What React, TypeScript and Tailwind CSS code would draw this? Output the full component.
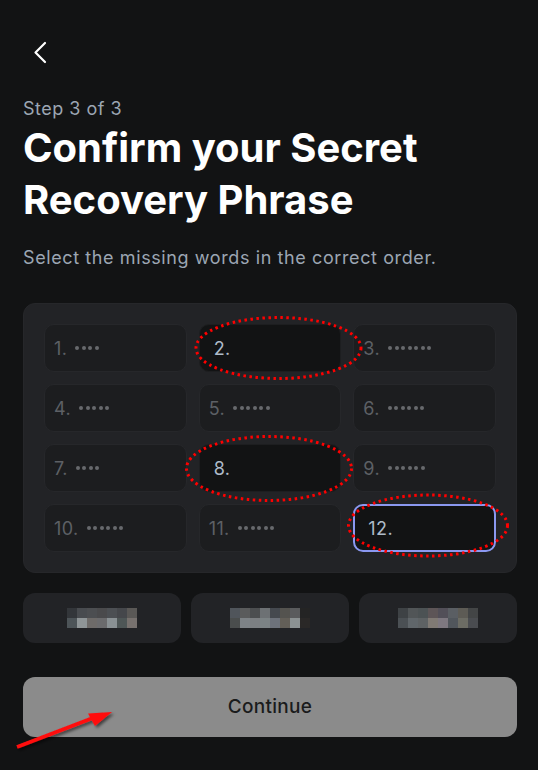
import React from "react";

type Cell = { n: number; dots?: number; active?: boolean };

const cells: Cell[] = [
  { n: 1, dots: 4 },
  { n: 2 },
  { n: 3, dots: 7 },
  { n: 4, dots: 5 },
  { n: 5, dots: 6 },
  { n: 6, dots: 6 },
  { n: 7, dots: 4 },
  { n: 8 },
  { n: 9, dots: 6 },
  { n: 10, dots: 6 },
  { n: 11, dots: 6 },
  { n: 12, active: true },
];

// pixelated (redacted) words, 2 rows each
const blurred: string[][][] = [
  [
    ["#33363a", "#484b4f", "#4c4e51", "#4a4a4c", "#4c4f53", "#45474b", "#5a5856"],
    ["#4d5458", "#8f9597", "#6e6b69", "#6b6b6d", "#8a9194", "#4e5656", "#77716e"],
  ],
  [
    ["#50555b", "#5a5b5c", "#4c4e50", "#6d7174", "#45494f", "#54534f", "#5a5b5d", "#242424"],
    ["#4a4d4d", "#7e8387", "#7c7f82", "#7c8385", "#6d727b", "#635f58", "#8c9293", "#2a2827"],
  ],
  [
    ["#3e4245", "#515557", "#4c5254", "#5d5557", "#524f58", "#5a5e63", "#5d5b55", "#434546"],
    ["#4b5054", "#60666a", "#5e6264", "#807a74", "#7e7880", "#51565c", "#6c6c64", "#4a4c50"],
  ],
];

function Dots({ count }: { count: number }) {
  return (
    <span className="ml-2 flex items-center gap-[2.5px]">
      {Array.from({ length: count }).map((_, i) => (
        <span key={i} className="h-[4px] w-[4px] rounded-full bg-[#67696d]" />
      ))}
    </span>
  );
}

function WordCell({ cell }: { cell: Cell }) {
  if (cell.dots) {
    return (
      <div className="flex h-12 items-center rounded-[10px] border border-[#26272a] bg-[#1c1d1f] pl-[9px] text-[18px] tracking-[0.4px] text-[#5d6065]">
        <span>{cell.n}.</span>
        <Dots count={cell.dots} />
      </div>
    );
  }
  return (
    <div
      className={
        cell.active
          ? "flex h-12 items-center rounded-[10px] border-2 border-[#8b98f0] bg-[#121314] pl-[13px] text-[18px] tracking-[0.4px] text-[#aebbc9]"
          : "flex h-12 items-center rounded-[10px] border border-[#1d1e20] bg-[#121314] pl-[14px] text-[18px] tracking-[0.4px] text-[#aebbc9]"
      }
    >
      <span>{cell.n}.</span>
    </div>
  );
}

function Annotations() {
  return (
    <svg
      className="pointer-events-none absolute left-0 top-0"
      width="538"
      height="770"
      viewBox="0 0 538 770"
    >
      <defs>
        <filter id="shadow" x="-20%" y="-50%" width="140%" height="200%">
          <feDropShadow dx="2" dy="2" stdDeviation="1.5" floodColor="#000" floodOpacity="0.55" />
        </filter>
      </defs>
      <g fill="none" stroke="#ff0000" strokeWidth="3" strokeDasharray="2.5 3.5">
        <ellipse cx="278.5" cy="348" rx="82.5" ry="30.5" />
        <ellipse cx="269" cy="468.5" rx="82.5" ry="32" />
        <ellipse cx="428" cy="525.5" rx="79.5" ry="30.5" />
      </g>
      <g filter="url(#shadow)">
        <line x1="17" y1="747" x2="98" y2="716" stroke="#ff1010" strokeWidth="3.5" />
        <polygon points="112,712 88,713.5 95,726" fill="#ff1010" />
      </g>
    </svg>
  );
}

export default function App() {
  return (
    <div
      className="relative min-h-screen bg-[#121314] pl-[23px] pr-[21px] pt-[40px]"
      style={{ fontFamily: "Inter, 'Noto Sans', sans-serif" }}
    >
      <button className="ml-[5px] block h-6 w-6 text-white">
        <svg width="24" height="24" viewBox="0 0 24 24" fill="none">
          <path
            d="M17 3 7.5 12.5 17 22"
            stroke="currentColor"
            strokeWidth="2.2"
            strokeLinecap="round"
            strokeLinejoin="round"
          />
        </svg>
      </button>

      <p className="mt-[33px] text-[18px] leading-6 tracking-[0.5px] text-[#9ca6b3]">Step 3 of 3</p>
      <h1 className="mt-px text-[40px] font-bold leading-[52px] text-white">
        Confirm your Secret
        <br />
        Recovery Phrase
      </h1>
      <p className="mt-5 text-[18px] leading-6 tracking-[0.6px] text-[#9ca6b3]">
        Select the missing words in the correct order.
      </p>

      <div className="mt-[33px] rounded-[12px] border border-[#26272a] bg-[#222326] p-5">
        <div className="grid grid-cols-3 gap-3">
          {cells.map((c) => (
            <WordCell key={c.n} cell={c} />
          ))}
        </div>
      </div>

      <div className="mt-5 grid grid-cols-3 gap-[10px]">
        {blurred.map((word, i) => (
          <button
            key={i}
            className="flex h-[50px] items-center justify-center rounded-[12px] bg-[#222326]"
          >
            <span className="flex flex-col">
              {word.map((row, r) => (
                <span key={r} className="flex">
                  {row.map((color, k) => (
                    <span key={k} className="h-[10px] w-[10px]" style={{ backgroundColor: color }} />
                  ))}
                </span>
              ))}
            </span>
          </button>
        ))}
      </div>

      <button className="mt-[34px] flex h-[60px] w-full items-center justify-center rounded-[12px] bg-[#8b8b8b] text-[19px] font-medium tracking-[0.3px] text-[#1a1b1c]">
        Continue
      </button>

      <Annotations />
    </div>
  );
}
